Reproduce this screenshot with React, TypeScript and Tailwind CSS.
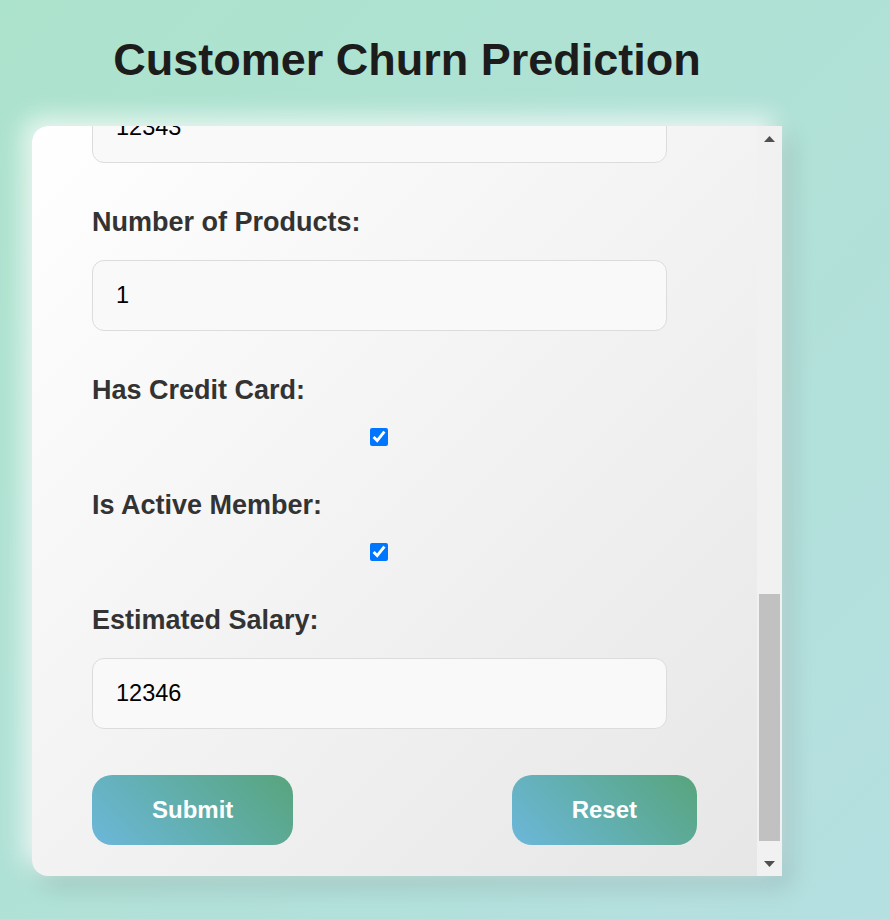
import { useLayoutEffect, useRef } from "react";

type Field =
  | { kind: "text"; label: string; value: string }
  | { kind: "select"; label: string; value: string; options: string[] }
  | { kind: "check"; label: string; checked: boolean };

const fields: Field[] = [
  { kind: "text", label: "Credit Score:", value: "650" },
  { kind: "select", label: "Geography:", value: "France", options: ["France", "Germany", "Spain"] },
  { kind: "select", label: "Gender:", value: "Male", options: ["Male", "Female"] },
  { kind: "text", label: "Age:", value: "35" },
  { kind: "text", label: "Tenure:", value: "5" },
  { kind: "text", label: "Balance:", value: "12343" },
  { kind: "text", label: "Number of Products:", value: "1" },
  { kind: "check", label: "Has Credit Card:", checked: true },
  { kind: "check", label: "Is Active Member:", checked: true },
  { kind: "text", label: "Estimated Salary:", value: "12346" },
];

const inputClass =
  "block w-[95%] h-[71px] rounded-[12px] border border-[#dcdcdc] bg-[#f9f9f9] pl-[23px] pr-4 text-[23.5px] text-black outline-none";

const btnClass =
  "h-[70px] rounded-[20px] bg-linear-45 from-[#6cb7da] to-[#58a47c] px-[60px] text-[24px] font-bold text-white";

const FormField = ({ field }: { field: Field }) => {
  return (
    <div className="mb-[44px]">
      <label className="block mb-[22px] text-[27px] leading-[31px] font-bold text-[#333]">
        {field.label}
      </label>
      {field.kind === "text" && (
        <input className={inputClass} type="text" defaultValue={field.value} />
      )}
      {field.kind === "select" && (
        <select className={inputClass} defaultValue={field.value}>
          {field.options.map((o) => (
            <option key={o}>{o}</option>
          ))}
        </select>
      )}
      {field.kind === "check" && (
        <div className="flex w-[95%] justify-center">
          <input
            type="checkbox"
            defaultChecked={field.checked}
            className="m-0 h-[18px] w-[18px] accent-[#0075ff]"
          />
        </div>
      )}
    </div>
  );
};

const Arrow = ({ up }: { up?: boolean }) => (
  <div className="flex h-[25px] items-center justify-center">
    <svg width="11" height="6" viewBox="0 0 11 6">
      <path d={up ? "M5.5 0 L11 6 L0 6 Z" : "M0 0 L11 0 L5.5 6 Z"} fill="#505050" />
    </svg>
  </div>
);

export default function App() {
  const scrollRef = useRef<HTMLDivElement>(null);

  useLayoutEffect(() => {
    if (scrollRef.current) {
      scrollRef.current.scrollTop = scrollRef.current.scrollHeight;
    }
  }, []);

  return (
    <div
      className="min-h-screen bg-gradient-to-br from-[#ace3cc] to-[#b5dfe1] pt-[34px] pl-[32px]"
      style={{ fontFamily: '"Liberation Sans", Arial, sans-serif' }}
    >
      <div className="w-[750px]">
        <h1 className="mb-[40px] text-center text-[45px] leading-[52px] font-bold text-[#1c1c1c]">
          Customer Churn Prediction
        </h1>
        <div className="flex h-[750px] overflow-hidden rounded-l-[16px] bg-gradient-to-br from-[#ffffff] to-[#e6e6e6] shadow-[-8px_-8px_25px_rgba(255,255,255,0.8),8px_10px_25px_rgba(0,0,0,0.13)]">
          <div
            ref={scrollRef}
            className="flex-1 overflow-y-scroll px-[60px] pt-[40px] pb-[31px] [scrollbar-width:none]"
          >
            <form onSubmit={(e) => e.preventDefault()}>
              {fields.map((f) => (
                <FormField key={f.label} field={f} />
              ))}
              <div className="flex justify-between pt-[2px]">
                <button type="submit" className={btnClass}>
                  Submit
                </button>
                <button type="reset" className={btnClass}>
                  Reset
                </button>
              </div>
            </form>
          </div>
          <div className="flex w-[25px] flex-col bg-[#f1f1f1]">
            <Arrow up />
            <div className="flex flex-1 flex-col justify-end px-[2px] pb-[10px]">
              <div className="h-[247px] bg-[#c1c1c1]" />
            </div>
            <Arrow />
          </div>
        </div>
      </div>
    </div>
  );
}
